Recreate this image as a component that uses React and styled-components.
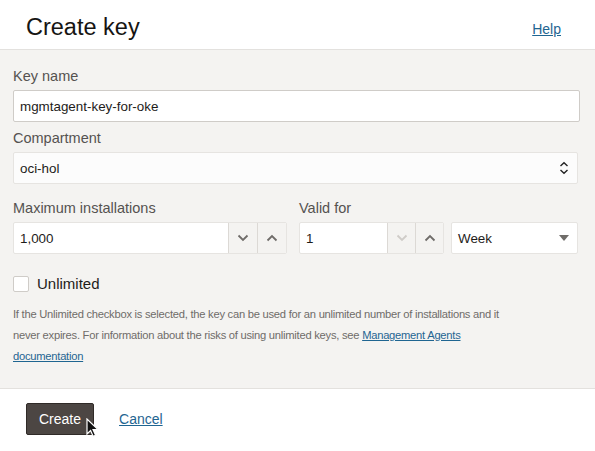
import React, { useState } from "react";
import styled, { createGlobalStyle } from "styled-components";

const GlobalStyle = createGlobalStyle`
  html, body {
    margin: 0;
    padding: 0;
    background: #ffffff;
    font-family: "Liberation Sans", Arial, sans-serif;
  }
  * { box-sizing: border-box; }
`;

// ---------------- styled components ----------------
const Panel = styled.div`
  width: 595px;
  height: 451px;
  overflow: hidden;
  position: relative;
  background: #ffffff;
`;
const Header = styled.header`
  height: 50px;
  display: flex;
  align-items: center;
  justify-content: space-between;
  padding: 5px 34px 0 26px;
  border-bottom: 1px solid #e3e1de;
`;
const Title = styled.h1`
  margin: 0;
  font-size: 23.5px;
  font-weight: 400;
  color: #161513;
`;
const Link = styled.a`
  color: #1f6591;
  text-decoration: underline;
  font-size: ${(p) => p.$size || "14px"};
  margin-top: ${(p) => p.$mt || "0"};
  cursor: pointer;
`;
const Body = styled.div`
  background: #f4f3f1;
  padding: 16px 15px 21px 13px;
`;
const Field = styled.div`
  display: flex;
  flex-direction: column;
  gap: 4px;
  margin-bottom: ${(p) => p.$gap || "6px"};
`;
const Label = styled.label`
  font-size: 14.5px;
  line-height: 20px;
  color: #555250;
`;
const TextInput = styled.input`
  height: 32px;
  width: 100%;
  padding: 0 6px;
  font: inherit;
  font-size: 13.4px;
  color: #1e1c1a;
  background: #ffffff;
  border: 1px solid #cfccc8;
  border-radius: 2px;
  outline: none;
`;
const SelectBox = styled.div`
  height: 32px;
  display: flex;
  align-items: center;
  justify-content: space-between;
  padding: 0 8px 0 6px;
  font-size: 13.4px;
  color: #1e1c1a;
  background: ${(p) => p.$bg || "#fcfcfc"};
  border: 1px solid #e6e4e1;
  border-radius: 2px;
  margin-right: ${(p) => p.$mr || "0"};
`;
const Row = styled.div`
  display: flex;
  align-items: flex-end;
`;
const RowCell = styled.div`
  display: flex;
  flex-direction: column;
  gap: 4px;
  width: ${(p) => p.$w};
  margin-left: ${(p) => p.$ml || "0"};
`;
const Stepper = styled.div`
  height: 32px;
  display: flex;
  border: 1px solid #e6e4e1;
  border-radius: 2px;
  background: #ffffff;
  overflow: hidden;
`;
const StepValue = styled.div`
  flex: 1;
  display: flex;
  align-items: center;
  padding: 0 6px;
  font-size: 13.4px;
  color: #1e1c1a;
`;
const StepButton = styled.button`
  width: ${(p) => p.$w || "29px"};
  border: none;
  border-left: 1px solid #dcd9d5;
  background: #f4f3f1;
  display: flex;
  align-items: center;
  justify-content: center;
  padding: 0;
  color: ${(p) => (p.disabled ? "#cfccc8" : "#6f6c69")};
`;
const CheckRow = styled.label`
  display: flex;
  align-items: center;
  gap: 8px;
  margin: 21px 0 12px;
  font-size: 15px;
  color: #1e1c1a;
`;
const Box = styled.span`
  width: 16px;
  height: 16px;
  background: #ffffff;
  border: 1px solid #cfccc8;
  border-radius: 2px;
`;
const Help = styled.p`
  margin: 0;
  max-width: 500px;
  font-size: 11.2px;
  letter-spacing: -0.25px;
  line-height: 21px;
  color: #6f6c69;
`;
const Footer = styled.footer`
  border-top: 1px solid #e3e1de;
  padding: 14px 26px;
  display: flex;
  align-items: center;
  gap: 25px;
  position: relative;
`;
const PrimaryButton = styled.button`
  height: 32px;
  padding: 0 12px;
  font: inherit;
  font-size: 14px;
  color: #ffffff;
  background: #4c4643;
  border: 1px solid #2f2a27;
  border-radius: 2px;
`;
const Cursor = styled.svg`
  position: absolute;
  left: 86px;
  top: 29px;
  pointer-events: none;
`;

// ---------------- icons ----------------
const Chevron = ({ up }) => (
  <svg width="12" height="8" viewBox="0 0 12 8">
    <path
      d={up ? "M1.5 6.5 L6 2 L10.5 6.5" : "M1.5 1.5 L6 6 L10.5 1.5"}
      fill="none"
      stroke="currentColor"
      strokeWidth="1.8"
    />
  </svg>
);
const UpDown = () => (
  <svg width="10" height="14" viewBox="0 0 10 14">
    <path d="M1.5 5 L5 1.8 L8.5 5 M1.5 9 L5 12.2 L8.5 9" fill="none" stroke="#222" strokeWidth="1.4" />
  </svg>
);
const Caret = () => (
  <svg width="10" height="6" viewBox="0 0 10 6">
    <path d="M0 0 L10 0 L5 6 Z" fill="#6f6c69" />
  </svg>
);

// ---------------- component ----------------
const App = () => {
  const [name, setName] = useState("mgmtagent-key-for-oke");

  return (
    <Panel>
      <GlobalStyle />
      <Header>
        <Title>Create key</Title>
        <Link $mt="3px">Help</Link>
      </Header>

      <Body>
        <Field>
          <Label>Key name</Label>
          <TextInput value={name} onChange={(e) => setName(e.target.value)} />
        </Field>

        <Field $gap="14px">
          <Label>Compartment</Label>
          <SelectBox $mr="2px">
            oci-hol
            <UpDown />
          </SelectBox>
        </Field>

        <Row>
          <RowCell $w="274px">
            <Label>Maximum installations</Label>
            <Stepper>
              <StepValue>1,000</StepValue>
              <StepButton>
                <Chevron />
              </StepButton>
              <StepButton>
                <Chevron up />
              </StepButton>
            </Stepper>
          </RowCell>
          <RowCell $w="145px" $ml="12px">
            <Label>Valid for</Label>
            <Stepper>
              <StepValue>1</StepValue>
              <StepButton $w="28px" disabled>
                <Chevron />
              </StepButton>
              <StepButton $w="28px">
                <Chevron up />
              </StepButton>
            </Stepper>
          </RowCell>
          <RowCell $w="127px" $ml="7px">
            <SelectBox $bg="#ffffff">
              Week
              <Caret />
            </SelectBox>
          </RowCell>
        </Row>

        <CheckRow>
          <Box />
          Unlimited
        </CheckRow>

        <Help>
          If the Unlimited checkbox is selected, the key can be used for an unlimited number of
          installations and it never expires. For information about the risks of using unlimited
          keys, see <Link $size="11.2px">Management Agents documentation</Link>
        </Help>
      </Body>

      <Footer>
        <PrimaryButton>Create</PrimaryButton>
        <Link>Cancel</Link>
        <Cursor width="14" height="20" viewBox="0 0 14 20">
          <path d="M1 1 L1 16 L4.6 12.6 L7.2 18.4 L9.6 17.3 L7 11.6 L12 11.6 Z" fill="#111" stroke="#fff" strokeWidth="1.2" />
        </Cursor>
      </Footer>
    </Panel>
  );
};

export default App;
